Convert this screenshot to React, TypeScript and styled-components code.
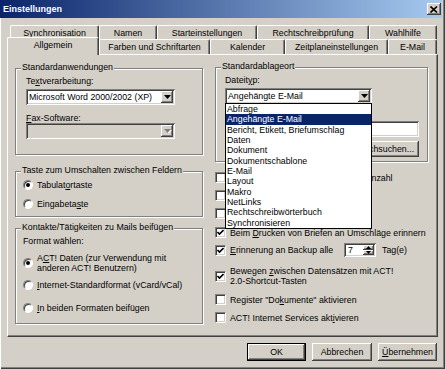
import React from "react"
import styled, { createGlobalStyle, css } from "styled-components"

const GlobalStyle = createGlobalStyle`
  html, body {
    margin: 0;
    padding: 0;
    background: #d4d0c8;
  }
  body {
    font-family: "Liberation Sans", Arial, sans-serif;
    font-size: 8.8px;
    color: #000;
  }
`

const raised = css`
  box-shadow: inset -1px -1px #404040, inset 1px 1px #fff, inset -2px -2px #808080;
`

const sunken = css`
  box-shadow: inset 1px 1px #808080, inset -1px -1px #fff, inset 2px 2px #404040,
    inset -2px -2px #d4d0c8;
`

const Window = styled.div`
  width: 445px;
  height: 369px;
  box-sizing: border-box;
  display: flex;
  flex-direction: column;
  background: #d4d0c8;
  box-shadow: inset 1px 0 #fff, inset -1px -1px #404040, inset -2px -2px #808080;
  overflow: hidden;
`

const TitleBar = styled.div`
  height: 18px;
  margin-right: 3px;
  padding: 0 1px 0 3px;
  display: flex;
  align-items: center;
  justify-content: space-between;
  background: linear-gradient(to right, #0a246a, #a6caf0);
  color: #fff;
  font-weight: bold;
  font-size: 9px;
`

const CloseButton = styled.div`
  width: 14px;
  height: 12px;
  display: flex;
  align-items: center;
  justify-content: center;
  background: #d4d0c8;
  ${raised}
`

const Body = styled.div`
  padding: 7px 7px 0 7px;
  display: flex;
  flex-direction: column;
`

const TabRow = styled.div<{ $front?: boolean }>`
  display: flex;
  height: ${p => (p.$front ? 17 : 12)}px;
  margin-left: ${p => (p.$front ? 0 : 3)}px;
  align-items: ${p => (p.$front ? "flex-end" : "flex-start")};
`

const Tab = styled.div<{ $w: number; $front?: boolean; $active?: boolean }>`
  position: relative;
  z-index: ${p => (p.$active ? 2 : 1)};
  width: ${p => p.$w}px;
  height: ${p => (p.$active ? 18 : p.$front ? 15 : 14)}px;
  margin-bottom: ${p => (p.$active ? -1 : p.$front ? 0 : -2)}px;
  box-sizing: border-box;
  flex: none;
  border-top: 1px solid #fff;
  border-left: 1px solid #fff;
  border-right: 1px solid #404040;
  border-radius: 2px 2px 0 0;
  box-shadow: inset -1px 0 #808080;
  background: #d4d0c8;
  padding-top: 2px;
  line-height: 10px;
  text-align: center;
  white-space: nowrap;
`

const Panel = styled.div`
  height: 283px;
  box-sizing: border-box;
  border: 1px solid;
  border-color: #fff #404040 #404040 #fff;
  box-shadow: inset -1px -1px #808080;
  padding: 7px 9px 0 7px;
  display: grid;
  grid-template-columns: 188px 213px;
  column-gap: 12px;
  align-items: start;
`

const Column = styled.div`
  display: flex;
  flex-direction: column;
  align-items: stretch;
`

const Group = styled.div<{ $mt: number; $pb: number; $pl: number }>`
  --pl: ${p => p.$pl}px;
  margin-top: ${p => p.$mt}px;
  border: 1px solid #808080;
  box-shadow: inset 1px 1px #fff, 1px 1px #fff;
  padding: 0 8px ${p => p.$pb}px var(--pl);
  display: flex;
  flex-direction: column;
  align-items: flex-start;
`

const Legend = styled.div`
  margin: -7px 0 0 calc(5px - var(--pl));
  padding: 0 1px;
  line-height: 11px;
  background: #d4d0c8;
  white-space: nowrap;
`

const Label = styled.div<{ $mt: number }>`
  margin-top: ${p => p.$mt}px;
  line-height: 10px;
  white-space: nowrap;
`

const Spacer = styled.div<{ $h: number }>`
  height: ${p => p.$h}px;
`

const Combo = styled.div<{ $w: number; $mt: number; $disabled?: boolean }>`
  position: relative;
  width: ${p => p.$w}px;
  height: 16px;
  margin-top: ${p => p.$mt}px;
  box-sizing: border-box;
  padding: 2px;
  display: flex;
  background: ${p => (p.$disabled ? "#d4d0c8" : "#fff")};
  ${sunken}
`

const ComboText = styled.div`
  flex: 1;
  padding-left: 1px;
  line-height: 12px;
  white-space: nowrap;
  overflow: hidden;
`

const ArrowButton = styled.div`
  width: 12px;
  height: 12px;
  flex: none;
  display: flex;
  align-items: center;
  justify-content: center;
  background: #d4d0c8;
  ${raised}
`

const DropList = styled.div`
  position: absolute;
  z-index: 10;
  top: 15px;
  left: 0;
  right: 0;
  border: 1px solid #000;
  background: #fff;
`

const DropItem = styled.div<{ $selected?: boolean }>`
  height: 10.33px;
  line-height: 10.33px;
  padding-left: 1px;
  white-space: nowrap;
  background: ${p => (p.$selected ? "#0a246a" : "transparent")};
  color: ${p => (p.$selected ? "#fff" : "#000")};
`

const TextInput = styled.div<{ $mt: number }>`
  align-self: stretch;
  height: 16px;
  margin-top: ${p => p.$mt}px;
  background: #fff;
  ${sunken}
`

const Button = styled.div<{ $w: number; $default?: boolean; $mt?: number }>`
  width: ${p => p.$w}px;
  height: 18px;
  margin-top: ${p => p.$mt ?? 0}px;
  box-sizing: border-box;
  display: flex;
  align-items: center;
  justify-content: center;
  background: #d4d0c8;
  line-height: 10px;
  white-space: nowrap;
  border: ${p => (p.$default ? "1px solid #000" : "none")};
  ${raised}
`

const BrowseButton = styled(Button)`
  align-self: flex-end;
  height: 16px;
`

const RadioRow = styled.div<{ $mt: number }>`
  display: flex;
  align-items: center;
  gap: 4px;
  margin-top: ${p => p.$mt}px;
  min-height: 14px;
  line-height: 10px;
`

const RadioCircle = styled.div<{ $on?: boolean }>`
  width: 10px;
  height: 10px;
  box-sizing: border-box;
  flex: none;
  border-radius: 50%;
  border: 1px solid;
  border-color: #808080 #fff #fff #808080;
  box-shadow: inset 1px 1px #404040;
  background: #fff;
  display: flex;
  align-items: center;
  justify-content: center;
  &::after {
    content: "";
    width: 4px;
    height: 4px;
    border-radius: 50%;
    background: ${p => (p.$on ? "#000" : "transparent")};
  }
`

const CheckRow = styled.div<{ $mt: number }>`
  display: flex;
  align-items: center;
  gap: 4px;
  margin-top: ${p => p.$mt}px;
  min-height: 11px;
  line-height: 10px;
  white-space: nowrap;
`

const CheckBox = styled.div`
  width: 11px;
  height: 11px;
  box-sizing: border-box;
  flex: none;
  border: 1px solid;
  border-color: #808080 #fff #fff #808080;
  box-shadow: inset 1px 1px #404040, inset -1px -1px #d4d0c8;
  background: #fff;
  display: flex;
  align-items: center;
  justify-content: center;
`

const FixedLabel = styled.span`
  width: 110px;
`

const SpinBox = styled.div`
  width: 32px;
  height: 14px;
  box-sizing: border-box;
  padding: 2px;
  display: flex;
  background: #fff;
  ${sunken}
`

const SpinText = styled.div`
  flex: 1;
  padding-left: 2px;
  line-height: 10px;
`

const SpinButtons = styled.div`
  width: 11px;
  display: flex;
  flex-direction: column;
`

const SpinHalf = styled.div`
  flex: 1;
  display: flex;
  align-items: center;
  justify-content: center;
  background: #d4d0c8;
  ${raised}
`

const Unit = styled.span`
  margin-left: 2px;
`

const ButtonBar = styled.div`
  display: flex;
  justify-content: flex-end;
  gap: 6px;
  margin-top: 6px;
  padding-right: 1px;
`

function Arrow({ disabled }: { disabled?: boolean }) {
  return (
    <svg width="7" height="4" viewBox="0 0 7 4" style={{ overflow: "visible" }}>
      {disabled && <polygon points="1,1 8,1 4.5,4.5" fill="#fff" />}
      <polygon points="0,0 7,0 3.5,4" fill={disabled ? "#808080" : "#000"} />
    </svg>
  )
}

function SmallArrow({ up }: { up?: boolean }) {
  return (
    <svg width="5" height="3" viewBox="0 0 5 3">
      <polygon points={up ? "2.5,0 5,3 0,3" : "0,0 5,0 2.5,3"} fill="#000" />
    </svg>
  )
}

function Check() {
  return (
    <svg width="7" height="7" viewBox="0 0 7 7">
      <path d="M0.5 3 L2.5 5 L6.5 1" stroke="#000" strokeWidth="1.6" fill="none" />
    </svg>
  )
}

const fileTypes = [
  "Abfrage",
  "Angehängte E-Mail",
  "Bericht, Etikett, Briefumschlag",
  "Daten",
  "Dokument",
  "Dokumentschablone",
  "E-Mail",
  "Layout",
  "Makro",
  "NetLinks",
  "Rechtschreibwörterbuch",
  "Synchronisieren"
]

const backTabs: [string, number][] = [
  ["Synchronisation", 89],
  ["Namen", 58],
  ["Starteinstellungen", 100],
  ["Rechtschreibprüfung", 112],
  ["Wahlhilfe", 68]
]

const frontTabs: [string, number][] = [
  ["Allgemein", 92],
  ["Farben und Schriftarten", 111],
  ["Kalender", 75],
  ["Zeitplaneinstellungen", 103],
  ["E-Mail", 49]
]

export default function App() {
  return (
    <>
      <GlobalStyle />
      <Window>
        <TitleBar>
          <span>Einstellungen</span>
          <CloseButton>
            <svg width="8" height="7" viewBox="0 0 8 7">
              <path d="M0.5 0.5 L7 6.5 M7 0.5 L0.5 6.5" stroke="#000" strokeWidth="1.6" />
            </svg>
          </CloseButton>
        </TitleBar>
        <Body>
          <TabRow>
            {backTabs.map(([name, w]) => (
              <Tab key={name} $w={w}>
                {name}
              </Tab>
            ))}
          </TabRow>
          <TabRow $front>
            {frontTabs.map(([name, w], i) => (
              <Tab key={name} $w={w} $front $active={i === 0}>
                {name}
              </Tab>
            ))}
          </TabRow>
          <Panel>
            <Column>
              <Group $mt={6} $pb={15} $pl={10}>
                <Legend>Standardanwendungen</Legend>
                <Label $mt={3}>
                  Te<u>x</u>tverarbeitung:
                </Label>
                <Combo $w={149} $mt={3}>
                  <ComboText>Microsoft Word 2000/2002 (XP)</ComboText>
                  <ArrowButton>
                    <Arrow />
                  </ArrowButton>
                </Combo>
                <Label $mt={8}>
                  <u>F</u>ax-Software:
                </Label>
                <Combo $w={149} $mt={0} $disabled>
                  <ComboText />
                  <ArrowButton>
                    <Arrow disabled />
                  </ArrowButton>
                </Combo>
              </Group>

              <Group $mt={16} $pb={5} $pl={7}>
                <Legend>Taste zum Umschalten zwischen Feldern</Legend>
                <RadioRow $mt={2}>
                  <RadioCircle $on />
                  <span>
                    Tabulat<u>o</u>rtaste
                  </span>
                </RadioRow>
                <RadioRow $mt={5}>
                  <RadioCircle />
                  <span>
                    Eingabeta<u>s</u>te
                  </span>
                </RadioRow>
              </Group>

              <Group $mt={11} $pb={8} $pl={7}>
                <Legend>Kontakte/Tätigkeiten zu Mails beifügen</Legend>
                <Label $mt={3}>Format wählen:</Label>
                <RadioRow $mt={7}>
                  <RadioCircle $on />
                  <span>
                    A<u>C</u>T! Daten (zur Verwendung mit
                    <br />
                    anderen ACT! Benutzern)
                  </span>
                </RadioRow>
                <RadioRow $mt={5}>
                  <RadioCircle />
                  <span>
                    <u>I</u>nternet-Standardformat (vCard/vCal)
                  </span>
                </RadioRow>
                <RadioRow $mt={9}>
                  <RadioCircle />
                  <span>
                    <u>I</u>n beiden Formaten beifügen
                  </span>
                </RadioRow>
              </Group>
            </Column>

            <Column>
              <Group $mt={5} $pb={4} $pl={9}>
                <Legend>Standardablageort</Legend>
                <Label $mt={3}>
                  Dateit<u>y</u>p:
                </Label>
                <Combo $w={147} $mt={3}>
                  <ComboText>Angehängte E-Mail</ComboText>
                  <ArrowButton>
                    <Arrow />
                  </ArrowButton>
                  <DropList>
                    {fileTypes.map(t => (
                      <DropItem key={t} $selected={t === "Angehängte E-Mail"}>
                        {t}
                      </DropItem>
                    ))}
                  </DropList>
                </Combo>
                <Spacer $h={14} />
                <TextInput $mt={3} />
                <BrowseButton $w={69} $mt={4}>
                  Durchsuchen...
                </BrowseButton>
              </Group>

              <CheckRow $mt={10}>
                <CheckBox />
                <span>Warnung bei überhöhter Datensatzanzahl</span>
              </CheckRow>
              <CheckRow $mt={7}>
                <CheckBox />
              </CheckRow>
              <CheckRow $mt={7}>
                <CheckBox />
              </CheckRow>
              <CheckRow $mt={8}>
                <CheckBox>
                  <Check />
                </CheckBox>
                <span>
                  Beim <u>D</u>rucken von Briefen an Umschläge erinnern
                </span>
              </CheckRow>
              <CheckRow $mt={5}>
                <CheckBox>
                  <Check />
                </CheckBox>
                <FixedLabel>
                  <u>E</u>rinnerung an Backup alle
                </FixedLabel>
                <SpinBox>
                  <SpinText>7</SpinText>
                  <SpinButtons>
                    <SpinHalf>
                      <SmallArrow up />
                    </SpinHalf>
                    <SpinHalf>
                      <SmallArrow />
                    </SpinHalf>
                  </SpinButtons>
                </SpinBox>
                <Unit>Tag(e)</Unit>
              </CheckRow>
              <CheckRow $mt={9}>
                <CheckBox>
                  <Check />
                </CheckBox>
                <span>
                  Bewegen <u>z</u>wischen Datensätzen mit ACT!
                  <br />
                  2.0-Shortcut-Tasten
                </span>
              </CheckRow>
              <CheckRow $mt={8}>
                <CheckBox />
                <span>
                  Register "Do<u>k</u>umente" aktivieren
                </span>
              </CheckRow>
              <CheckRow $mt={7}>
                <CheckBox />
                <span>
                  ACT! Internet Services akt<u>i</u>vieren
                </span>
              </CheckRow>
            </Column>
          </Panel>
          <ButtonBar>
            <Button $w={59} $default>
              OK
            </Button>
            <Button $w={60}>Abbrechen</Button>
            <Button $w={59}>
              <u>Ü</u>bernehmen
            </Button>
          </ButtonBar>
        </Body>
      </Window>
    </>
  )
}
